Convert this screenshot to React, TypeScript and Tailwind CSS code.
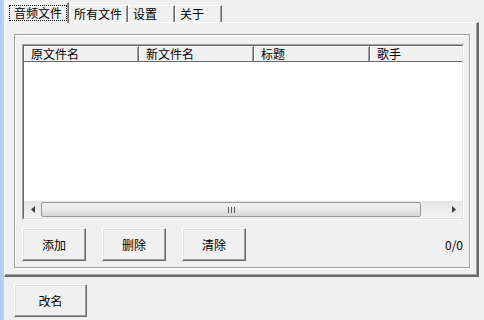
const font = { fontFamily: '"Noto Sans CJK SC", "Noto Sans", sans-serif' };

function Btn({ label, w }: { label: string; w: string }) {
  return (
    <div
      className={`${w} h-[33px] flex items-center justify-center bg-[#f0f0f0] border border-t-white border-l-white border-r-[#696969] border-b-[#696969] shadow-[inset_-1px_-1px_0_#a0a0a0,inset_1px_1px_0_#e3e3e3] text-[12px] leading-none text-black`}
    >
      {label}
    </div>
  );
}

function Tab({ label, active, w }: { label: string; active?: boolean; w: string }) {
  if (active) {
    return (
      <div className={`${w} h-[21px] -mb-[1px] relative z-10 bg-[#f0f0f0] border-t border-l border-white border-r border-r-[#696969] shadow-[inset_-1px_0_0_#a0a0a0] flex items-start pt-[2px] pl-[2px]`}>
        <div className="h-[16px] w-[58px] border border-dotted border-black flex items-center justify-center text-[12px] leading-none">
          {label}
        </div>
      </div>
    );
  }
  return (
    <div className={`${w} h-[17px] bg-[#f0f0f0] border-t border-l border-white border-r border-r-[#696969] shadow-[inset_-1px_0_0_#a0a0a0] flex items-center pl-[4px] text-[12px] leading-none`}>
      {label}
    </div>
  );
}

const cols = [
  { name: '原文件名', w: 'w-[115px]' },
  { name: '新文件名', w: 'w-[115px]' },
  { name: '标题', w: 'w-[116px]' },
  { name: '歌手', w: 'w-[92px]' },
];

export default function App() {
  return (
    <div className="w-[484px] h-[320px] bg-[#f0f0f0] flex overflow-hidden text-black" style={font}>
      <div className="w-[4px] h-full bg-gradient-to-r from-[#a9c9ec] to-[#bcd6f3] shrink-0" />
      <div className="flex flex-col w-[480px]">
        {/* tabs */}
        <div className="h-[22px] flex items-end pl-[2px]">
          <Tab label="音频文件" active w="w-[63px]" />
          <Tab label="所有文件" w="w-[59px]" />
          <Tab label="设置" w="w-[47px]" />
          <Tab label="关于" w="w-[47px]" />
        </div>
        {/* tab page */}
        <div className="w-[475px] h-[255px] border-t border-l border-white border-r-2 border-b-2 border-r-[#696969] border-b-[#696969] shadow-[inset_-1px_-1px_0_#a0a0a0] pl-[9px] pt-[11px]">
          <div className="w-[456px] h-[234px] border border-[#a0a0a0] shadow-[1px_1px_0_#fff,inset_1px_1px_0_#fff] pl-[7px] pt-[9px] flex flex-col">
            {/* list view */}
            <div className="w-[442px] h-[176px] bg-white border border-t-[#a0a0a0] border-l-[#a0a0a0] border-r-white border-b-white">
              <div className="w-full h-full border border-t-[#696969] border-l-[#696969] border-r-[#e3e3e3] border-b-[#e3e3e3] flex flex-col">
                <div className="h-[16px] flex bg-[#f0f0f0] border-b border-[#696969] shrink-0">
                  {cols.map((c, i) => (
                    <div
                      key={c.name}
                      className={`${c.w} h-full flex items-center pl-[6px] text-[12px] leading-none border-t border-l border-white ${i < 3 ? 'border-r border-r-[#696969] shadow-[inset_-1px_0_0_#a0a0a0]' : ''}`}
                    >
                      {c.name}
                    </div>
                  ))}
                </div>
                <div className="flex-1" />
                {/* horizontal scrollbar */}
                <div className="h-[17px] flex bg-gradient-to-b from-[#e6e6e6] to-[#f3f3f3] shrink-0">
                  <div className="w-[17px] h-full flex items-center justify-center">
                    <svg width="4" height="7" viewBox="0 0 4 7">
                      <path d="M4 0 L0 3.5 L4 7 Z" fill="#404040" />
                    </svg>
                  </div>
                  <div className="w-[380px] h-[15px] mt-[1px] rounded-[2px] border border-[#979797] bg-gradient-to-b from-[#f4f4f4] via-[#e8e8e8] to-[#d6d6d6] flex items-center justify-center">
                    <svg width="7" height="6" viewBox="0 0 7 6">
                      <rect x="0" y="0" width="1" height="6" fill="#5a5a5a" />
                      <rect x="3" y="0" width="1" height="6" fill="#5a5a5a" />
                      <rect x="6" y="0" width="1" height="6" fill="#5a5a5a" />
                    </svg>
                  </div>
                  <div className="flex-1" />
                  <div className="w-[17px] h-full flex items-center justify-center">
                    <svg width="4" height="7" viewBox="0 0 4 7">
                      <path d="M0 0 L4 3.5 L0 7 Z" fill="#404040" />
                    </svg>
                  </div>
                </div>
              </div>
            </div>
            {/* buttons */}
            <div className="flex items-center gap-[16px] mt-[8px] w-[442px]">
              <Btn label="添加" w="w-[64px]" />
              <Btn label="删除" w="w-[64px]" />
              <Btn label="清除" w="w-[64px]" />
              <div className="flex-1 text-right text-[12px] leading-none pr-[1px]">0/0</div>
            </div>
          </div>
        </div>
        <div className="pl-[10px] pt-[7px]">
          <Btn label="改名" w="w-[73px]" />
        </div>
      </div>
    </div>
  );
}
